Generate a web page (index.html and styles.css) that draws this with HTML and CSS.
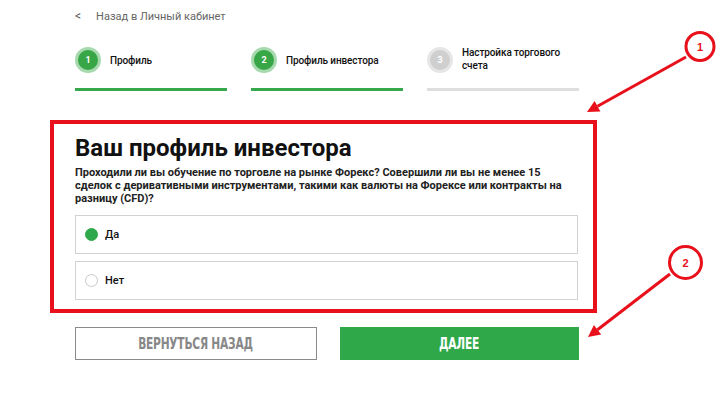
FILE: index.html
```html
<!DOCTYPE html>
<html lang="ru">
<head>
<meta charset="utf-8">
<link rel="stylesheet" href="styles.css">
</head>
<body>
<div class="page">
  <a class="back" href="#"><span class="chev">&lt;</span><span>Назад в Личный кабинет</span></a>
  <div class="steps">
    <div class="step done">
      <div class="step-head"><span class="num">1</span><span class="label">Профиль</span></div>
      <div class="bar"></div>
    </div>
    <div class="step done">
      <div class="step-head"><span class="num">2</span><span class="label">Профиль инвестора</span></div>
      <div class="bar"></div>
    </div>
    <div class="step todo">
      <div class="step-head"><span class="num">3</span><span class="label">Настройка торгового<br>счета</span></div>
      <div class="bar"></div>
    </div>
  </div>
  <div class="highlight">
    <h1 class="title">Ваш профиль инвестора</h1>
    <p class="question">Проходили ли вы обучение по торговле на рынке Форекс? Совершили ли вы не менее 15 сделок с деривативными инструментами, такими как валюты на Форексе или контракты на разницу (CFD)?</p>
    <div class="options">
      <label class="option"><span class="radio checked"></span><span>Да</span></label>
      <label class="option"><span class="radio"></span><span>Нет</span></label>
    </div>
  </div>
  <div class="actions">
    <button class="btn btn-back"><span class="btn-text">ВЕРНУТЬСЯ НАЗАД</span></button>
    <button class="btn btn-next"><span class="btn-text">ДАЛЕЕ</span></button>
  </div>
</div>
<svg class="annot" width="725" height="399" viewBox="0 0 725 399">
  <circle cx="700" cy="46.5" r="14" fill="#fff" stroke="#e8101a" stroke-width="3"/>
  <text x="700" y="50.5" text-anchor="middle" class="annot-num">1</text>
  <line x1="686" y1="57" x2="597.5" y2="106.2" stroke="#e8101a" stroke-width="3"/>
  <polygon points="587,112 600.4,111.4 594.6,101" fill="#e8101a"/>
  <circle cx="685.5" cy="262.5" r="16" fill="#fff" stroke="#e8101a" stroke-width="3"/>
  <text x="685.5" y="266.5" text-anchor="middle" class="annot-num">2</text>
  <line x1="670" y1="274" x2="597.5" y2="329.7" stroke="#e8101a" stroke-width="3"/>
  <polygon points="588,337 601.2,334.5 593.9,324.9" fill="#e8101a"/>
</svg>
</body>
</html>
```
FILE: styles.css
```css
* { box-sizing: border-box; }
html, body { margin: 0; padding: 0; background: #fff; }
body {
  font-family: Roboto, "Liberation Sans", Arial, sans-serif;
  color: #111;
  width: 725px;
  height: 399px;
  overflow: hidden;
  position: relative;
}
.page {
  padding-top: 8px;
}
.back {
  display: flex;
  align-items: center;
  gap: 15px;
  margin-left: 75px;
  height: 16px;
  font-size: 11px;
  color: #666;
  text-decoration: none;
}
.chev { font-size: 12px; font-weight: 400; color: #555; }
.steps {
  display: flex;
  gap: 24px;
  margin-left: 75px;
  width: 504px;
  margin-top: 23px;
}
.step { flex: 1; }
.step-head {
  display: flex;
  align-items: center;
  gap: 9px;
  height: 26px;
}
.num {
  width: 26px;
  height: 26px;
  flex: none;
  border-radius: 50%;
  display: flex;
  align-items: center;
  justify-content: center;
  font-size: 9px;
  font-weight: 700;
  color: #fff;
}
.done .num { background: #38a547; border: 3px solid #a6d9ad; }
.todo .num { background: #cfcfcf; border: 3px solid #e6e6e6; }
.label {
  font-size: 10px;
  font-weight: 500;
  line-height: 13px;
  color: #111;
  letter-spacing: -0.1px;
}
.todo .label { margin-top: -2px; }
.bar {
  height: 3px;
  margin-top: 15px;
}
.done .bar { background: #34a84a; }
.todo .bar { background: #dedede; }
.highlight {
  margin-top: 29px;
  margin-left: 50px;
  width: 547px;
  border: 4px solid #e8101a;
  padding: 10px 15px 9px 21px;
}
.title {
  margin: 0;
  font-size: 24px;
  line-height: 28px;
  font-weight: 700;
  color: #111;
}
.question {
  margin: 4px 0 0;
  font-size: 11px;
  line-height: 13px;
  font-weight: 700;
  color: #222;
}
.options {
  display: flex;
  flex-direction: column;
  gap: 7px;
  margin-top: 10px;
}
.option {
  display: flex;
  align-items: center;
  gap: 7px;
  height: 39px;
  border: 1px solid #d2d2d2;
  padding-left: 9px;
  font-size: 11px;
  font-weight: 500;
  color: #111;
}
.radio {
  width: 13px;
  height: 13px;
  border-radius: 50%;
  border: 1px solid #c8c8c8;
  background: #fff;
}
.radio.checked { background: #2fa84a; border-color: #2fa84a; }
.actions {
  display: flex;
  gap: 23px;
  margin-left: 75px;
  width: 504px;
  margin-top: 14px;
}
.btn {
  flex: 1;
  height: 33px;
  display: flex;
  align-items: center;
  justify-content: center;
  font-family: "DejaVu Sans Condensed", "DejaVu Sans", sans-serif;
  font-stretch: condensed;
  font-weight: 700;
  font-size: 16px;
  padding: 0;
  cursor: pointer;
}
.btn-text { display: inline-block; transform: scaleX(0.74); letter-spacing: -0.3px; }
.btn-back { background: #fff; border: 1px solid #8a8a8a; color: #888; }
.btn-next { background: #2fa84a; border: none; color: #fff; }
.annot {
  position: absolute;
  top: 0;
  left: 0;
  pointer-events: none;
}
.annot-num {
  font-family: "Liberation Sans", Arial, sans-serif;
  font-weight: 700;
  font-size: 11px;
  fill: #e8101a;
}
```
